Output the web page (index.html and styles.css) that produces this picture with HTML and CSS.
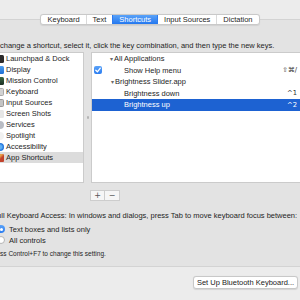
FILE: index.html
```html
<!DOCTYPE html>
<html lang="en">
<head>
  <meta charset="UTF-8" />
  <title>Keyboard — Shortcuts</title>
  <link rel="stylesheet" href="styles.css">
</head>
<body>
  <div class="window">
    <div class="tabs">
      <span class="tab">Keyboard</span>
      <span class="tab">Text</span>
      <span class="tab active">Shortcuts</span>
      <span class="tab">Input Sources</span>
      <span class="tab">Dictation</span>
    </div>

    <div class="pane">
      <p class="hint">To change a shortcut, select it, click the key combination, and then type the new keys.</p>

      <div class="split">
        <ul class="cats">
          <li><span class="ic ic-launch"></span>Launchpad &amp; Dock</li>
          <li><span class="ic ic-display"></span>Display</li>
          <li><span class="ic ic-mission"></span>Mission Control</li>
          <li><span class="ic ic-keyboard"></span>Keyboard</li>
          <li><span class="ic ic-input"></span>Input Sources</li>
          <li><span class="ic ic-shots"></span>Screen Shots</li>
          <li><span class="ic ic-services"></span>Services</li>
          <li><span class="ic ic-spotlight"></span>Spotlight</li>
          <li><span class="ic ic-access"></span>Accessibility</li>
          <li class="selected"><span class="ic ic-apps"></span>App Shortcuts</li>
        </ul>

        <div class="divider"><span class="grip"></span></div>

        <ul class="shortcuts">
          <li class="row">
            <span class="check"></span>
            <span class="name group"><span class="disclose">▾</span>All Applications</span>
          </li>
          <li class="row">
            <span class="check"><span class="box">
              <svg width="8" height="8" viewBox="0 0 8 8"><path d="M1.8 4.2 L3.4 5.8 L6.3 2.2" fill="none" stroke="#fff" stroke-width="1.3" stroke-linecap="round" stroke-linejoin="round"/></svg>
            </span></span>
            <span class="name item">Show Help menu</span>
            <span class="keys">⇧⌘/</span>
          </li>
          <li class="row">
            <span class="check"></span>
            <span class="name group sub"><span class="disclose">▾</span>Brightness Slider.app</span>
          </li>
          <li class="row">
            <span class="check"></span>
            <span class="name item">Brightness down</span>
            <span class="keys">^1</span>
          </li>
          <li class="row selected">
            <span class="check"></span>
            <span class="name item">Brightness up</span>
            <span class="keys">^2</span>
          </li>
        </ul>
      </div>

      <div class="addremove">
        <button class="small-btn">+</button>
        <button class="small-btn">−</button>
      </div>

      <p class="fka">Full Keyboard Access: In windows and dialogs, press Tab to move keyboard focus between:</p>
      <div class="radios">
        <div class="radio-row"><span class="radio on"></span>Text boxes and lists only</div>
        <div class="radio-row"><span class="radio"></span>All controls</div>
      </div>
      <p class="note">Press Control+F7 to change this setting.</p>
    </div>

    <div class="footer">
      <button class="bt-btn">Set Up Bluetooth Keyboard...</button>
    </div>
  </div>
</body>
</html>
```

FILE: styles.css
```css
body {
  margin: 0;
  padding: 0;
  background-color: #ececec;
  font-family: "Liberation Sans", "DejaVu Sans", sans-serif;
  font-size: 7.5px;
  color: #1e1e1e;
  overflow: hidden;
  width: 300px;
  height: 300px;
}

.window {
  width: 340px;
  margin-left: -20px;
  padding-top: 14px;
}

/* segmented control */
.tabs {
  position: relative;
  z-index: 1;
  display: flex;
  width: max-content;
  margin: 0 auto;
  background-color: #fff;
  border: 1px solid #c9c9c9;
  border-radius: 3px;
  box-shadow: 0 0.5px 1px rgba(0, 0, 0, 0.08);
  height: 9px;
}

.tab {
  padding: 0 6px;
  line-height: 9px;
  border-left: 1px solid #dadada;
  color: #262626;
}

.tab:first-child {
  border-left: none;
}

.tab.active {
  background: linear-gradient(#5aa2f8, #2478ef);
  color: #fff;
  border-left-color: #2d7bee;
}

.tab.active + .tab {
  border-left-color: #2d7bee;
}

/* grouped box */
.pane {
  margin-top: -6px;
  background-color: #e3e3e3;
  border-top: 1px solid #d3d3d3;
  border-bottom: 1px solid #d3d3d3;
  padding: 21px 10px 8px 10px;
}

.hint {
  margin: 0;
  line-height: 10px;
  white-space: nowrap;
}

.split {
  display: flex;
  margin-top: 1px;
  height: 131px;
}

ul {
  list-style: none;
  margin: 0;
  padding: 0;
}

.cats {
  width: 94px;
  background-color: #fff;
  border: 1px solid #cbcbcb;
  box-sizing: border-box;
  border-left: none;
}

.cats li {
  display: flex;
  align-items: center;
  height: 11px;
  padding-left: 6px;
  white-space: nowrap;
}

.cats li.selected {
  background-color: #dcdcdc;
}

.ic {
  width: 8px;
  height: 8px;
  margin-right: 2px;
  border-radius: 1.5px;
  flex: none;
}

.ic-launch { background-color: #2b2b2b; }
.ic-display { background: linear-gradient(#4fa0f0, #1d6fd6); }
.ic-mission { background: linear-gradient(#3c6a46, #1b2e22); }
.ic-keyboard { background-color: #d2d2d2; border: 0.5px solid #aaa; box-sizing: border-box; }
.ic-input { background-color: #c4c4c4; border: 0.5px solid #999; box-sizing: border-box; }
.ic-shots { background-color: #e6e6e6; }
.ic-services { background-color: #b9bcc4; border-radius: 50%; }
.ic-spotlight { background-color: #f1f1f1; border-radius: 50%; }
.ic-access { background: radial-gradient(circle, #5fb0f5 30%, #1468d8 70%); border-radius: 50%; }
.ic-apps { background: linear-gradient(135deg, #e7a04a 40%, #c2432c 60%); border-radius: 1px; }

.divider {
  width: 7px;
  display: flex;
  align-items: center;
  justify-content: center;
}

.grip {
  width: 2px;
  height: 3px;
  background-color: #b4b4b4;
  border-radius: 1px;
}

.shortcuts {
  flex: 1;
  background-color: #fff;
  border: 1px solid #cbcbcb;
  border-right: none;
  box-sizing: border-box;
}

.row {
  display: flex;
  align-items: center;
  height: 11.5px;
  white-space: nowrap;
}

.row.selected {
  background-color: #1d62d2;
  color: #fff;
}

.check {
  width: 16px;
  padding-left: 2px;
  flex: none;
  display: flex;
  align-items: center;
}

.box {
  width: 8px;
  height: 8px;
  border-radius: 2px;
  background: linear-gradient(#5aa2f8, #2a7cf0);
  display: flex;
}

.name {
  flex: 1;
}

.disclose {
  font-family: "DejaVu Sans", sans-serif;
  font-size: 6px;
  color: #6a6a6a;
  margin-right: 1px;
}

.group.sub {
  padding-left: 1px;
}

.item {
  padding-left: 14px;
}

.keys {
  padding-right: 13px;
  font-family: "DejaVu Sans", sans-serif;
  font-size: 6.8px;
  color: #333;
}

.row.selected .keys {
  color: #fff;
}

/* + / - buttons */
.addremove {
  display: flex;
  margin: 7px 0 0 100px;
}

.small-btn {
  width: 15px;
  height: 11px;
  padding: 0;
  margin: 0;
  border: 1px solid #cdcdcd;
  background-color: #f6f6f6;
  color: #555;
  font-family: "DejaVu Sans", sans-serif;
  font-size: 8px;
  line-height: 9px;
}

.small-btn + .small-btn {
  border-left: none;
}

.fka {
  margin: 10px 0 0 2.5px;
  line-height: 10px;
  white-space: nowrap;
}

.radios {
  margin: 2.5px 0 0 7px;
}

.radio-row {
  display: flex;
  align-items: center;
  height: 11px;
}

.radio {
  width: 8px;
  height: 8px;
  box-sizing: border-box;
  border-radius: 50%;
  border: 0.5px solid #b5b5b5;
  background-color: #fff;
  margin-right: 4px;
  display: flex;
  align-items: center;
  justify-content: center;
}

.radio.on {
  border: none;
  background: linear-gradient(#5aa2f8, #2a7cf0);
}

.radio.on::after {
  content: "";
  width: 3px;
  height: 3px;
  border-radius: 50%;
  background-color: #fff;
}

.note {
  margin: 3px 0 0 0;
  font-size: 6.5px;
  line-height: 9px;
}

.footer {
  display: flex;
  justify-content: flex-end;
  padding: 9px 22px 0 0;
}

.bt-btn {
  width: 105px;
  height: 13px;
  padding: 0;
  border: 1px solid #c8c8c8;
  border-radius: 3px;
  background-color: #fff;
  box-shadow: 0 0.5px 1px rgba(0, 0, 0, 0.1);
  font-family: "Liberation Sans", "DejaVu Sans", sans-serif;
  font-size: 7.5px;
  color: #222;
}
```
